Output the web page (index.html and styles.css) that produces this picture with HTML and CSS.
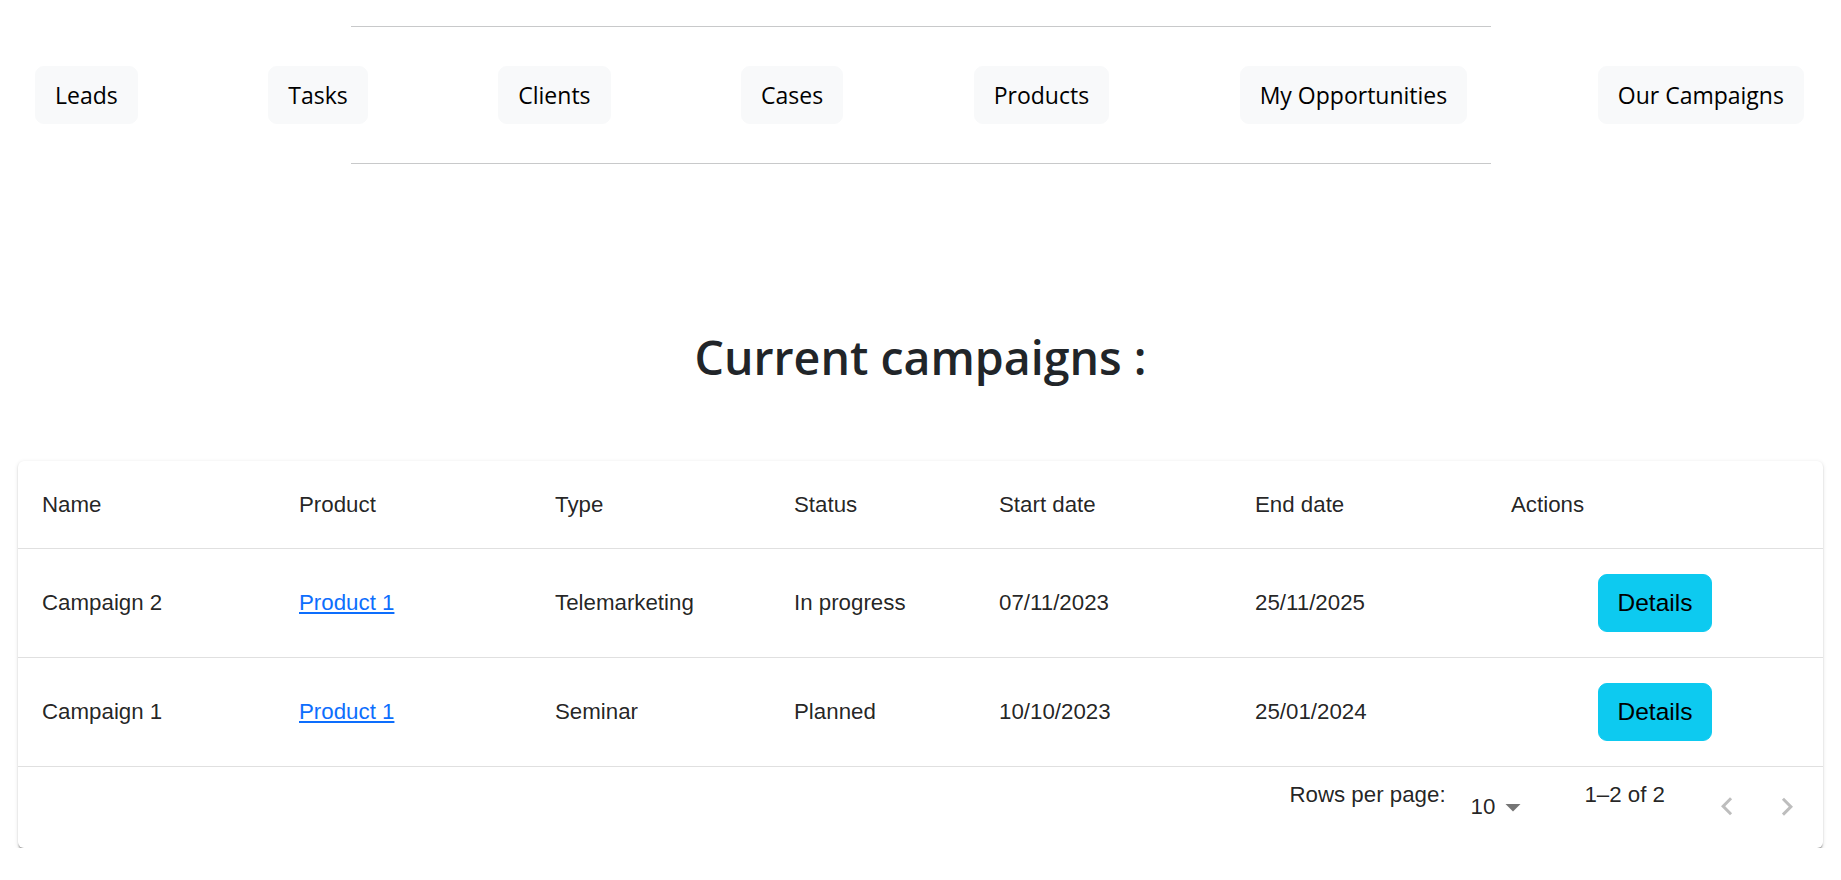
FILE: index.html
```html
<!DOCTYPE html>
<html lang="en">
<head>
<meta charset="utf-8">
<title>Our Campaigns</title>
<link rel="stylesheet" href="styles.css">
</head>
<body>
<header class="topbar">
  <hr class="rule">
  <nav class="menu">
    <a class="menu-btn" href="#">Leads</a>
    <a class="menu-btn" href="#">Tasks</a>
    <a class="menu-btn" href="#">Clients</a>
    <a class="menu-btn" href="#">Cases</a>
    <a class="menu-btn" href="#">Products</a>
    <a class="menu-btn" href="#">My Opportunities</a>
    <a class="menu-btn" href="#">Our Campaigns</a>
  </nav>
  <hr class="rule">
</header>

<main>
  <h2 class="title">Current campaigns :</h2>

  <section class="paper">
    <table class="grid">
      <colgroup>
        <col class="c-name"><col class="c-product"><col class="c-type"><col class="c-status"><col class="c-start"><col class="c-end"><col class="c-actions">
      </colgroup>
      <thead>
        <tr>
          <th>Name</th><th>Product</th><th>Type</th><th>Status</th><th>Start date</th><th>End date</th><th>Actions</th>
        </tr>
      </thead>
      <tbody>
        <tr>
          <td>Campaign 2</td>
          <td><a class="link" href="#">Product 1</a></td>
          <td>Telemarketing</td>
          <td>In progress</td>
          <td>07/11/2023</td>
          <td>25/11/2025</td>
          <td class="act"><button class="details">Details</button></td>
        </tr>
        <tr>
          <td>Campaign 1</td>
          <td><a class="link" href="#">Product 1</a></td>
          <td>Seminar</td>
          <td>Planned</td>
          <td>10/10/2023</td>
          <td>25/01/2024</td>
          <td class="act"><button class="details">Details</button></td>
        </tr>
      </tbody>
    </table>
    <div class="pager">
      <p class="pager-label">Rows per page:</p>
      <div class="pager-select">
        <span class="pager-value">10</span>
        <svg class="pager-caret" viewBox="0 0 24 24" width="36" height="36"><path d="M7 10l5 5 5-5z"/></svg>
      </div>
      <p class="pager-label">1–2 of 2</p>
      <div class="pager-actions">
        <span class="icon-btn"><svg viewBox="0 0 24 24" width="36" height="36"><path d="M15.41 16.09l-4.58-4.59 4.58-4.59L14 5.5l-6 6 6 6z"/></svg></span>
        <span class="icon-btn"><svg viewBox="0 0 24 24" width="36" height="36"><path d="M8.59 16.34l4.58-4.59-4.58-4.59L10 5.75l6 6-6 6z"/></svg></span>
      </div>
    </div>
  </section>
</main>
</body>
</html>
```

FILE: styles.css
```css
* { box-sizing: border-box; }

html, body {
  margin: 0;
  padding: 0;
  background: #fff;
}

body {
  font-family: "Open Sans", "Noto Sans", sans-serif;
  color: #212529;
}

.topbar {
  padding-top: 26px;
}

.rule {
  width: 1140px;
  margin: 0 auto;
  height: 0;
  border: 0;
  border-top: 1px solid #c8c9ca;
}

.menu {
  display: flex;
  justify-content: space-between;
  align-items: center;
  padding: 0 37px 0 35px;
  margin: 39px 0 39px;
}

.menu-btn {
  display: inline-block;
  background: #f8f9fa;
  border: 1px solid #f8f9fa;
  border-radius: 9px;
  color: #000;
  text-decoration: none;
  font-size: 23px;
  line-height: 36px;
  padding: 10px 19px;
  white-space: nowrap;
}

.title {
  margin: 165px 0 74px;
  text-align: center;
  font-size: 46.5px;
  font-weight: 600;
  line-height: 57.6px;
  color: #212529;
}

.paper {
  margin: 0 18px;
  background: #fff;
  border-radius: 6px;
  box-shadow: 0 3px 1.5px -1.5px rgba(0,0,0,0.2), 0 1.5px 1.5px 0 rgba(0,0,0,0.14), 0 1.5px 4.5px 0 rgba(0,0,0,0.12);
  font-family: "Liberation Sans", Arial, sans-serif;
  color: rgba(0,0,0,0.87);
  font-size: 22.3px;
}

.grid {
  width: 100%;
  table-layout: fixed;
  border-collapse: separate;
  border-spacing: 0;
}

.c-name { width: 257px; }
.c-product { width: 256px; }
.c-type { width: 239px; }
.c-status { width: 205px; }
.c-start { width: 256px; }
.c-end { width: 256px; }

.grid th,
.grid td {
  text-align: left;
  vertical-align: middle;
  border-bottom: 1px solid #e0e0e0;
  padding: 0 24px;
}

.grid th {
  font-weight: 400;
  height: 88px;
  line-height: 35px;
}

.grid td {
  height: 109px;
  line-height: 30px;
}

.grid td.act {
  text-align: center;
}

.link {
  color: #0d6efd;
  text-decoration: underline;
}

.details {
  font-family: "Liberation Sans", Arial, sans-serif;
  font-size: 24.5px;
  line-height: 36px;
  padding: 10px 19px;
  background: #0dcaf0;
  border: 1px solid #0dcaf0;
  border-radius: 9px;
  color: #000;
  vertical-align: middle;
}

.pager {
  display: flex;
  align-items: center;
  justify-content: flex-end;
  min-height: 81px;
  padding: 0 6px 0 24px;
}

.pager-label {
  margin: 0 0 24px;
  line-height: 30px;
  white-space: nowrap;
}

.pager-select {
  position: relative;
  margin: 0 53px 0 13px;
  padding: 0 36px 0 12px;
  line-height: 30px;
}

.pager-caret {
  position: absolute;
  right: 0;
  top: -3px;
  fill: rgba(0,0,0,0.54);
}

.pager-actions {
  display: flex;
  margin-left: 32px;
}

.icon-btn {
  display: inline-flex;
  padding: 12px;
}

.icon-btn svg {
  fill: rgba(0,0,0,0.26);
}
```
